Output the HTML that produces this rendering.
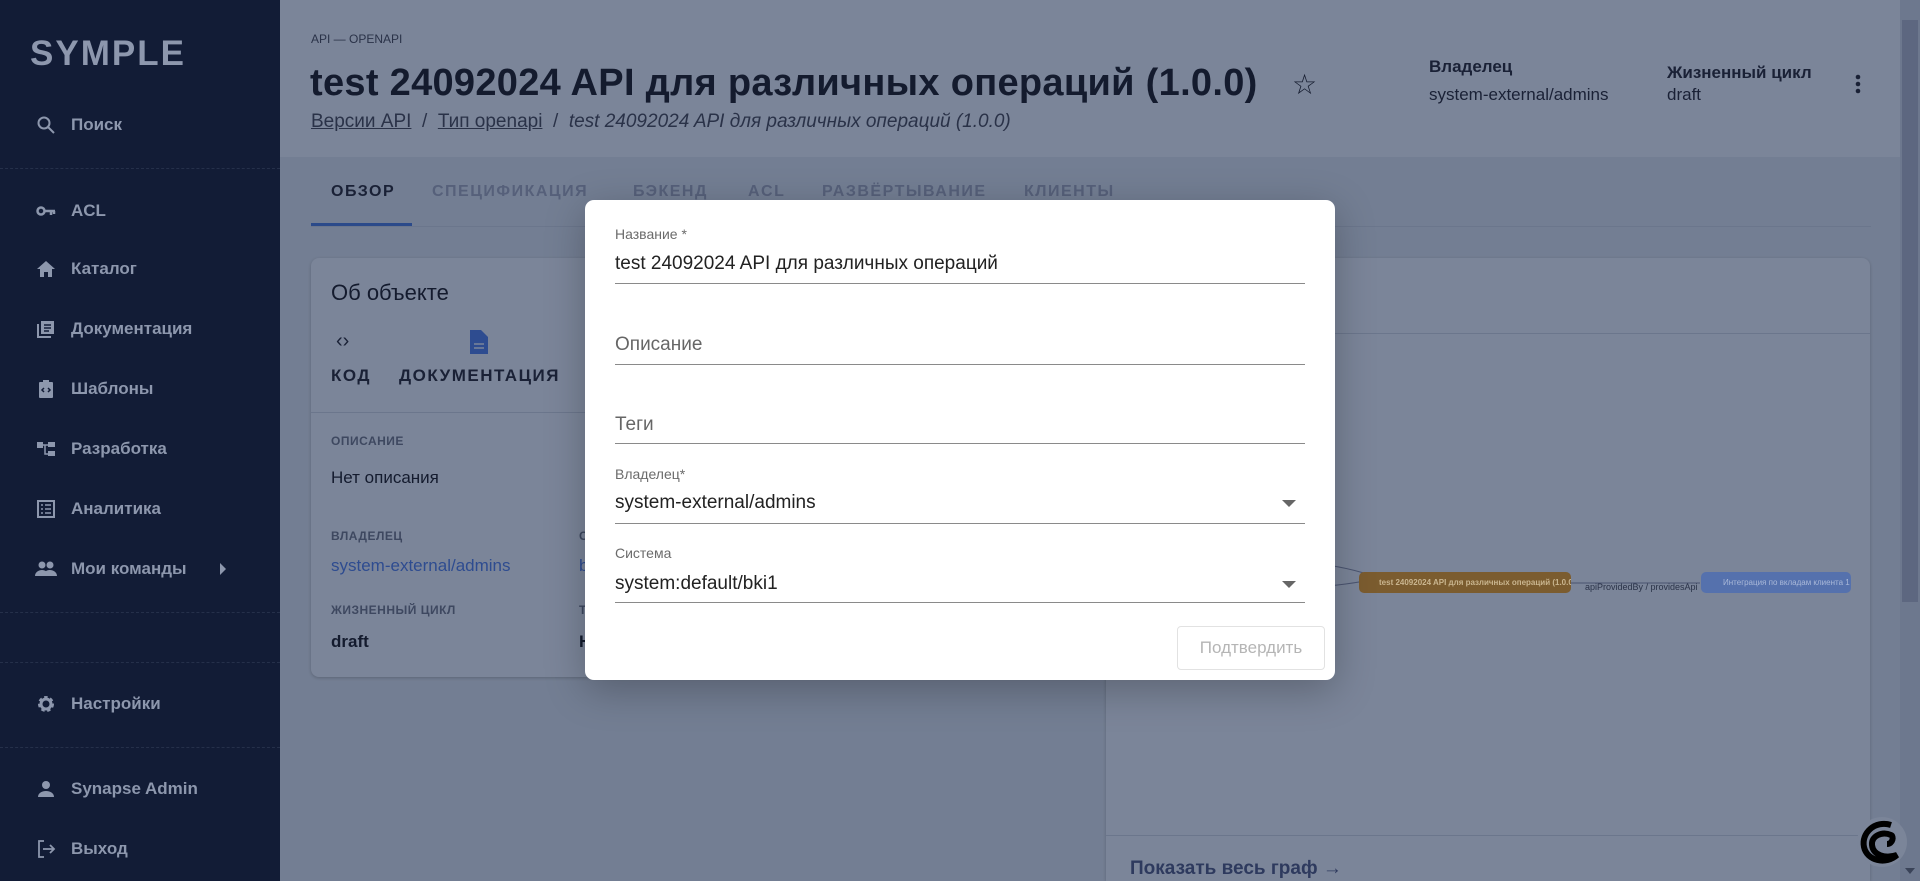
<!DOCTYPE html><html><head><meta charset="utf-8"><style>
*{box-sizing:border-box;margin:0;padding:0}
html,body{width:1920px;height:881px;overflow:hidden}
body{background:#737e93;font-family:"Liberation Sans","DejaVu Sans",sans-serif;position:relative}
.a{position:absolute;white-space:nowrap}
.sb{position:absolute;left:0;top:0;width:280px;height:881px;background:#121c36}
.nav{position:absolute;left:71px;color:#8d97ad;font-weight:bold;font-size:17px;transform:translateY(-50%)}
.ic{position:absolute;left:36px;width:20px;height:20px;transform:translateY(-50%)}
.hr{position:absolute;left:0;width:280px;border-top:1px dashed #25304a}
.hdr{position:absolute;left:280px;top:0;width:1620px;height:157px;background:#7b8599}
.tab{position:absolute;top:183px;font-size:16px;font-weight:bold;letter-spacing:1.5px;color:#56607a}
.card{position:absolute;background:#7b8599;border-radius:8px;box-shadow:0 1px 3px rgba(0,0,0,.2)}
.lbl{font-size:12px;font-weight:bold;color:#3e4860;letter-spacing:.5px}
.modal{position:absolute;left:585px;top:200px;width:750px;height:480px;background:#fff;border-radius:9px;box-shadow:0 10px 40px rgba(0,0,0,.25)}
.fl{position:absolute;left:30px;font-size:14px;color:#6b6b6b}
.fv{position:absolute;left:30px;font-size:19px;color:#222}
.ln{position:absolute;left:30px;width:690px;border-top:1px solid #8a8a8a}
.arr{position:absolute;left:697px;width:0;height:0;border-left:7px solid transparent;border-right:7px solid transparent;border-top:7px solid #666}
</style></head><body>
<div class="sb"></div>
<div class="a" style="left:30px;top:34px;font-size:35px;color:#8d97ad;letter-spacing:2px;font-weight:bold">SYMPLE</div>
<svg class="ic" style="top:125px" viewBox="0 0 20 20"><circle cx="8" cy="8" r="5.5" fill="none" stroke="#8d97ad" stroke-width="2"/><path d="M12 12l6 6" stroke="#8d97ad" stroke-width="2"/></svg>
<div class="nav" style="top:125px">Поиск</div>
<div class="hr" style="top:168px"></div>
<svg class="ic" style="top:211px" viewBox="0 0 20 20"><circle cx="5" cy="10" r="3.5" fill="none" stroke="#8d97ad" stroke-width="2.5"/><path d="M8 10h11M15 10v4M18 10v3" stroke="#8d97ad" stroke-width="2.5"/></svg>
<div class="nav" style="top:211px">ACL</div>
<svg class="ic" style="top:269px" viewBox="0 0 20 20"><path d="M10 2L1 10h3v8h4v-5h4v5h4v-8h3z" fill="#8d97ad"/></svg>
<div class="nav" style="top:269px">Каталог</div>
<svg class="ic" style="top:329px" viewBox="0 0 20 20"><path d="M2 5v13h13" fill="none" stroke="#8d97ad" stroke-width="2"/><rect x="5" y="2" width="13" height="13" fill="#8d97ad"/><path d="M8 6h7M8 9h7M8 12h5" stroke="#121c36" stroke-width="1.5"/></svg>
<div class="nav" style="top:329px">Документация</div>
<svg class="ic" style="top:389px" viewBox="0 0 20 20"><rect x="3" y="3" width="14" height="16" rx="1" fill="#8d97ad"/><rect x="7" y="1" width="6" height="4" fill="#8d97ad"/><path d="M8 9l-2 2 2 2M12 9l2 2-2 2" stroke="#121c36" stroke-width="1.5" fill="none"/></svg>
<div class="nav" style="top:389px">Шаблоны</div>
<svg class="ic" style="top:449px" viewBox="0 0 20 20"><rect x="1" y="3" width="6" height="6" fill="#8d97ad"/><rect x="12" y="3" width="7" height="5" fill="#8d97ad"/><rect x="12" y="12" width="7" height="5" fill="#8d97ad"/><path d="M7 6h5M9 6v9h3" stroke="#8d97ad" stroke-width="1.5" fill="none"/></svg>
<div class="nav" style="top:449px">Разработка</div>
<svg class="ic" style="top:509px" viewBox="0 0 20 20"><rect x="2" y="2" width="16" height="16" fill="none" stroke="#8d97ad" stroke-width="2"/><path d="M5 6h2M9 6h6M5 10h2M9 10h6M5 14h2M9 14h6" stroke="#8d97ad" stroke-width="1.6"/></svg>
<div class="nav" style="top:509px">Аналитика</div>
<svg class="ic" style="top:569px;width:24px;left:34px" viewBox="0 0 24 20"><circle cx="8" cy="6" r="3.5" fill="#8d97ad"/><circle cx="16" cy="6" r="3.5" fill="#8d97ad"/><path d="M1 17c0-4 4-6 7-6s7 2 7 6zM12 12c2-1 3-1 4-1 3 0 7 2 7 6h-8" fill="#8d97ad"/></svg>
<div class="nav" style="top:569px">Мои команды</div>
<div class="a" style="left:220px;top:563px;border-left:6px solid #8d97ad;border-top:6px solid transparent;border-bottom:6px solid transparent"></div>
<div class="hr" style="top:612px"></div>
<div class="hr" style="top:662px"></div>
<svg class="ic" style="top:704px" viewBox="0 0 20 20"><circle cx="10" cy="10" r="6" fill="none" stroke="#8d97ad" stroke-width="4" stroke-dasharray="3 2.3"/><circle cx="10" cy="10" r="5" fill="none" stroke="#8d97ad" stroke-width="3"/></svg>
<div class="nav" style="top:704px">Настройки</div>
<div class="hr" style="top:747px"></div>
<svg class="ic" style="top:789px" viewBox="0 0 20 20"><circle cx="10" cy="6" r="4" fill="#8d97ad"/><path d="M2 18c0-4 4-6 8-6s8 2 8 6z" fill="#8d97ad"/></svg>
<div class="nav" style="top:789px">Synapse Admin</div>
<svg class="ic" style="top:849px" viewBox="0 0 20 20"><path d="M8 2H3v16h5" fill="none" stroke="#8d97ad" stroke-width="1.8"/><path d="M7 10h11M14 6l4 4-4 4" fill="none" stroke="#8d97ad" stroke-width="1.8"/></svg>
<div class="nav" style="top:849px">Выход</div>

<div class="hdr"></div>
<div class="a" style="left:311px;top:32px;font-size:12px;color:#2a3248">API — OPENAPI</div>
<div class="a" style="left:310px;top:62px;font-size:38px;font-weight:bold;color:#141b2e;letter-spacing:0.3px">test 24092024 API для различных операций (1.0.0)</div>
<div class="a" style="left:1292px;top:68px;font-size:28px;color:#141b2e">☆</div>
<div class="a" style="left:311px;top:111px;font-size:19px;color:#2a3248"><u>Версии API</u> &nbsp;/&nbsp; <u>Тип openapi</u> &nbsp;/&nbsp; <i>test 24092024 API для различных операций (1.0.0)</i></div>
<div class="a" style="left:1429px;top:57px;font-size:17px;font-weight:bold;color:#1a2136">Владелец</div>
<div class="a" style="left:1429px;top:85px;font-size:17px;color:#1a2136">system-external/admins</div>
<div class="a" style="left:1667px;top:63px;font-size:17px;font-weight:bold;color:#1a2136">Жизненный цикл</div>
<div class="a" style="left:1667px;top:85px;font-size:17px;color:#1a2136">draft</div>
<svg class="a" style="left:1853px;top:73px" width="10" height="24"><circle cx="5" cy="4" r="2.3" fill="#1a2136"/><circle cx="5" cy="11" r="2.3" fill="#1a2136"/><circle cx="5" cy="18" r="2.3" fill="#1a2136"/></svg>

<div class="a" style="left:311px;top:226px;width:1560px;border-top:1px solid #6b768c"></div>
<div class="a" style="left:311px;top:223px;width:101px;height:3px;background:#2b4a8a"></div>
<div class="tab" style="left:331px;color:#1a2136">ОБЗОР</div>
<div class="tab" style="left:432px">СПЕЦИФИКАЦИЯ</div>
<div class="tab" style="left:633px">БЭКЕНД</div>
<div class="tab" style="left:748px">ACL</div>
<div class="tab" style="left:822px">РАЗВЁРТЫВАНИЕ</div>
<div class="tab" style="left:1024px">КЛИЕНТЫ</div>

<div class="card" style="left:311px;top:258px;width:780px;height:419px"></div>
<div class="a" style="left:331px;top:280px;font-size:22px;color:#141b2e">Об объекте</div>
<div class="a" style="left:336px;top:330px;font-size:20px;color:#1a2136">‹›</div>
<svg class="a" style="left:470px;top:330px" width="18" height="24"><path d="M0 0h11l7 7v17H0z" fill="#2e4c90"/><path d="M4 14h10M4 18h10" stroke="#7b8599" stroke-width="1.6"/></svg>
<div class="a" style="left:331px;top:366px;font-size:17px;font-weight:bold;letter-spacing:1.5px;color:#1a2136">КОД</div>
<div class="a" style="left:399px;top:366px;font-size:17px;font-weight:bold;letter-spacing:1.5px;color:#1a2136">ДОКУМЕНТАЦИЯ</div>
<div class="a" style="left:311px;top:412px;width:780px;border-top:1px solid #6b768c"></div>
<div class="a lbl" style="left:331px;top:434px">ОПИСАНИЕ</div>
<div class="a" style="left:331px;top:468px;font-size:17px;color:#141b2e">Нет описания</div>
<div class="a lbl" style="left:331px;top:529px">ВЛАДЕЛЕЦ</div>
<div class="a" style="left:331px;top:556px;font-size:17px;color:#2e4c90">system-external/admins</div>
<div class="a lbl" style="left:579px;top:529px">С</div>
<div class="a" style="left:579px;top:556px;font-size:17px;color:#2e4c90">b</div>
<div class="a lbl" style="left:331px;top:603px">ЖИЗНЕННЫЙ ЦИКЛ</div>
<div class="a" style="left:331px;top:632px;font-size:17px;font-weight:bold;color:#141b2e">draft</div>
<div class="a lbl" style="left:579px;top:603px">Т</div>
<div class="a" style="left:579px;top:632px;font-size:17px;font-weight:bold;color:#141b2e">Н</div>

<div class="card" style="left:1106px;top:258px;width:764px;height:623px;border-radius:8px 8px 0 0"></div>
<div class="a" style="left:1106px;top:333px;width:764px;border-top:1px solid #6b768c"></div>
<div class="a" style="left:1106px;top:835px;width:764px;border-top:1px solid #6b768c"></div>
<div class="a" style="left:1130px;top:858px;font-size:19px;font-weight:bold;color:#2e3a5e">Показать весь граф →</div>
<svg class="a" style="left:1300px;top:550px" width="420" height="60"><path d="M0 12Q40 15 70 25M0 38Q40 36 70 30M260 33h140" stroke="#4a5470" fill="none"/></svg>
<div class="a" style="left:1359px;top:572px;width:212px;height:21px;background:#7b5c2f;border-radius:5px;font-size:8px;color:#c9b58f;padding:6px 0 0 20px;font-weight:bold;overflow:hidden">test 24092024 API для различных операций (1.0.0)</div>
<div class="a" style="left:1585px;top:582px;font-size:9px;color:#2a3248">apiProvidedBy / providesApi</div>
<div class="a" style="left:1701px;top:572px;width:150px;height:21px;background:#5571ad;border-radius:5px;font-size:8px;color:#a9b8d8;padding:6px 0 0 22px;overflow:hidden">Интеграция по вкладам клиента 1</div>

<div class="a" style="left:1900px;top:0;width:20px;height:881px;background:#6d788e"></div>
<div class="a" style="left:1902px;top:20px;width:16px;height:582px;background:#5d6780"></div>
<svg class="a" style="left:1855px;top:815px" width="54" height="54"><circle cx="27" cy="27" r="25" fill="#7b8599"/><path d="M36 10C20 5 6 18 9 32c3 14 22 18 33 8C30 44 18 40 17 30c-1-9 10-14 19-10 3 1 2 9-4 9" fill="none" stroke="#000" stroke-width="6"/></svg>
<div class="a" style="left:1905px;top:868px;border-top:6px solid #3a4358;border-left:5px solid transparent;border-right:5px solid transparent"></div>

<div class="modal">
<div class="fl" style="top:26px">Название *</div>
<div class="fv" style="top:53px">test 24092024 API для различных операций</div>
<div class="ln" style="top:83px"></div>
<div class="fv" style="top:134px;color:#666">Описание</div>
<div class="ln" style="top:164px"></div>
<div class="fv" style="top:214px;color:#666">Теги</div>
<div class="ln" style="top:243px"></div>
<div class="fl" style="top:266px">Владелец*</div>
<div class="fv" style="top:292px">system-external/admins</div>
<div class="arr" style="top:300px"></div>
<div class="ln" style="top:323px"></div>
<div class="fl" style="top:345px">Система</div>
<div class="fv" style="top:373px">system:default/bki1</div>
<div class="arr" style="top:381px"></div>
<div class="ln" style="top:402px"></div>
<div class="a" style="left:592px;top:426px;width:148px;height:44px;border:1px solid #e2e2e2;border-radius:4px;font-size:17px;color:#b5b5b5;text-align:center;line-height:42px">Подтвердить</div>
</div>
</body></html>
